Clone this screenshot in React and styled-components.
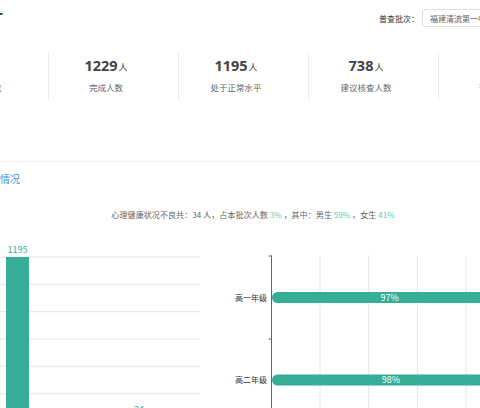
import React from "react";
import styled, { createGlobalStyle } from "styled-components";

const Global = createGlobalStyle`
  html, body { margin: 0; padding: 0; background: #fff; }
  body { overflow: hidden; width: 480px; height: 408px; }
`;

const FONT = `"Noto Sans CJK SC", "Noto Sans", "Liberation Sans", sans-serif`;

const Page = styled.div`
  margin-left: -82px;
  width: 670px;
  font-family: ${FONT};
  color: #333;
`;

const Header = styled.div`
  display: flex;
  align-items: center;
  justify-content: space-between;
  height: 36px;
`;

const Title = styled.div`
  font-size: 14px;
  font-weight: 700;
  color: #303133;
  padding-left: 1px;
  margin-top: -8px;
`;

const Filter = styled.div`
  display: flex;
  align-items: center;
  gap: 3px;
  font-size: 8px;
  color: #333;
`;

const Select = styled.div`
  width: 166px;
  height: 18px;
  box-sizing: border-box;
  border: 1px solid #dcdfe6;
  border-radius: 3px;
  padding-left: 7px;
  display: flex;
  align-items: center;
  color: #606266;
  font-size: 8px;
  white-space: nowrap;
  overflow: hidden;
`;

const StatRow = styled.div`
  display: flex;
  margin-top: 17px;
`;

const StatCard = styled.div`
  width: 130px;
  height: 47px;
  box-sizing: border-box;
  border-left: ${(p) => (p.$first ? "1px solid transparent" : "1px solid #ececec")};
  display: flex;
  flex-direction: column;
  align-items: center;
  padding: 4px 15px 0 0;
`;

const Value = styled.div`
  font-size: 14.5px;
  font-weight: 700;
  color: #444;
  line-height: 18px;
  white-space: nowrap;
  font-family: "Open Sans", ${FONT};
  span {
    font-size: 9px;
    font-weight: 400;
    margin-left: 1px;
    font-family: ${FONT};
  }
`;

const Label = styled.div`
  font-size: 8.5px;
  color: #666;
  margin-top: 4px;
  line-height: 12px;
  white-space: nowrap;
`;

const Divider = styled.div`
  height: 1px;
  background: #f0f0f0;
  margin-top: 61px;
`;

const SectionTitle = styled.div`
  font-size: 10px;
  line-height: 14px;
  color: #3d8fe0;
  margin-top: 10px;
  padding-left: 42px;
`;

const Summary = styled.div`
  text-align: center;
  font-size: 8.1px;
  line-height: 12px;
  color: #666;
  margin-top: 23px;
  em {
    font-style: normal;
    color: #5cccb2;
  }
`;

const Charts = styled.div`
  display: flex;
  margin-top: 18px;
`;

const ChartSvg = styled.svg`
  display: block;
  flex: none;
  font-family: ${FONT};
`;

const stats = [
  { v: "1263", l: "参与普查人数" },
  { v: "1229", l: "完成人数" },
  { v: "1195", l: "处于正常水平" },
  { v: "738", l: "建议核查人数" },
  { v: "34", l: "预警人数" },
];

const TEAL = "#35ad97";

function LeftChart() {
  const ys = [258, 285.3, 312.7, 340, 367.3, 394.7, 422];
  return (
    <ChartSvg width="297" height="170" viewBox="-82 240 297 170">
      {ys.map((y) => (
        <line key={y} x1="-43" x2="200" y1={y} y2={y} stroke="#e6e6e6" strokeWidth="1" />
      ))}
      <rect x="6" y="258" width="23" height="164" fill={TEAL} />
      <text x="17.5" y="253.5" fontSize="9" fill="#3aa892" textAnchor="middle">1195</text>
      <rect x="127.5" y="417.3" width="23" height="4.7" fill={TEAL} />
      <text x="139" y="413.5" fontSize="9" fill="#3aa892" textAnchor="middle">34</text>
    </ChartSvg>
  );
}

function RightChart() {
  const gx = [320, 368.7, 417.3, 466, 514.7, 563.3];
  const bars = [
    { name: "高一年级", pct: 97, y: 293 },
    { name: "高二年级", pct: 98, y: 375.5 },
  ];
  const full = 242.5;
  return (
    <ChartSvg width="373" height="170" viewBox="215 240 373 170">
      {gx.map((x) => (
        <line key={x} x1={x} x2={x} y1="256" y2="430" stroke="#e6e6e6" strokeWidth="1" />
      ))}
      <line x1="271.5" x2="271.5" y1="256.5" y2="430" stroke="#666" strokeWidth="1" />
      {[257, 340, 423].map((y) => (
        <line key={y} x1="268.5" x2="271.5" y1={y} y2={y} stroke="#666" strokeWidth="1" />
      ))}
      {bars.map((b) => {
        const w = (full * b.pct) / 100;
        return (
          <g key={b.name}>
            <rect x="272" y={b.y} width={w} height="11" rx="5.5" fill={TEAL} />
            <text x={272 + w / 2} y={b.y + 8.8} fontSize="9" fill="#fff" textAnchor="middle">
              {b.pct}%
            </text>
            <text x="267" y={b.y + 8.5} fontSize="8" fill="#333" textAnchor="end">
              {b.name}
            </text>
          </g>
        );
      })}
    </ChartSvg>
  );
}

export default function App() {
  return (
    <>
      <Global />
      <Page>
        <Header>
          <Title>心理普查统计</Title>
          <Filter>
            <span>普查批次：</span>
            <Select>福建清流第一中学2023年心理普查</Select>
          </Filter>
        </Header>
        <StatRow>
          {stats.map((s, i) => (
            <StatCard key={i} $first={i === 0}>
              <Value>
                {s.v}
                <span>人</span>
              </Value>
              <Label>{s.l}</Label>
            </StatCard>
          ))}
        </StatRow>
        <Divider />
        <SectionTitle>心理健康情况</SectionTitle>
        <Summary>
          心理健康状况不良共：34 人，占本批次人数 <em>3%</em> ，其中：男生 <em>59%</em> ，女生 <em>41%</em>
        </Summary>
        <Charts>
          <LeftChart />
          <RightChart />
        </Charts>
      </Page>
    </>
  );
}
